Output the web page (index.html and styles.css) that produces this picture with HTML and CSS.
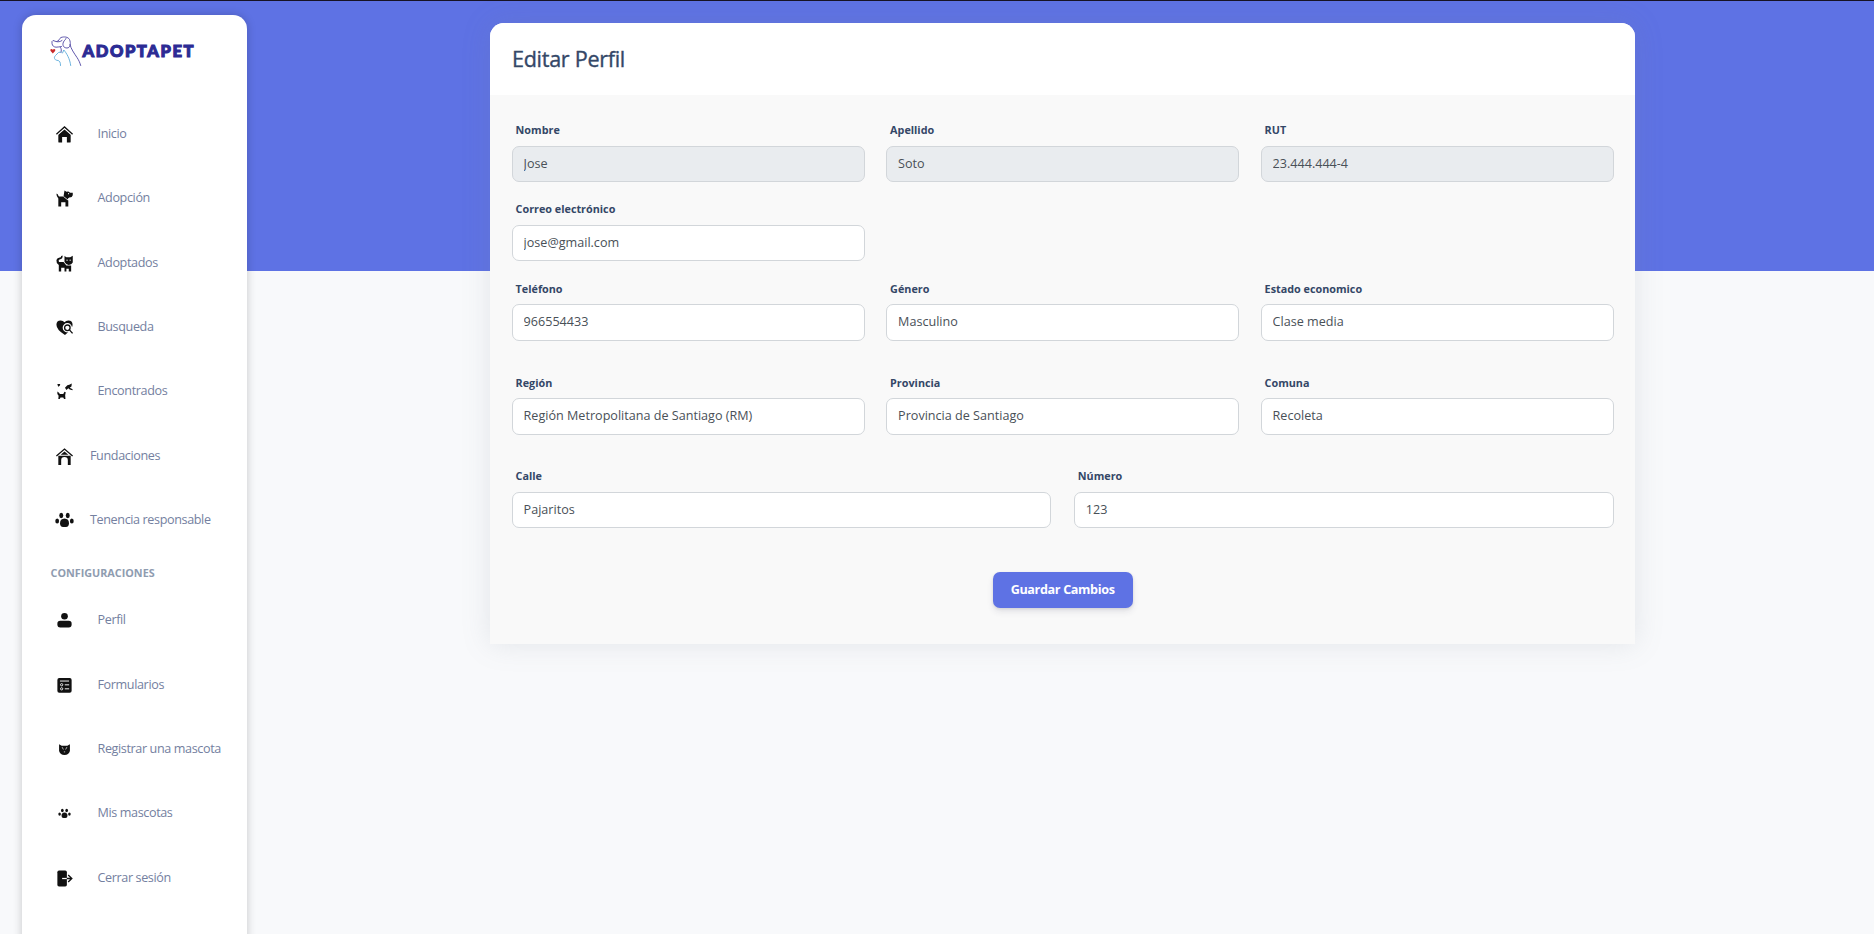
FILE: index.html
```html
<!DOCTYPE html>
<html lang="es">
<head>
<meta charset="utf-8">
<title>Adoptapet - Editar Perfil</title>
<link rel="stylesheet" href="styles.css">
</head>
<body>
<aside class="sidebar">
  <div class="brand">
    <svg width="148" height="34" viewBox="0 0 148 34" fill="none">
      <g stroke="#4f46a3" stroke-width=".9" stroke-linecap="round" stroke-linejoin="round">
        <path d="M14 6.500C12 8 10 8 8 7.500L5 6.500Q3.500 7 4 9.500C4.300 12 6 13 8 13.200C10 13.400 11.500 12.500 13.500 12.500"/>
        <path d="M9 7.500C11 7.500 11 4.500 13 3.500C16 2.500 20 2.700 21.500 5.500C23 9 22.500 14 19 14C15.500 14 14 11 15.500 8C16 6.500 17.500 6 18 4.500"/>
        <path d="M22 10.500C23 15 26 19 29 23.500C31 26.500 32 29 32.700 31.500M12.500 13.500C13.500 15 13.500 16.500 13 18.500"/>
      </g>
      <path d="M14.500 19L15.800 16C18.500 19 22 25 22.700 31.500M13 18L10.500 18.500Q9 20 7.500 21.500C5.500 23.500 6.500 26 9 26.300C12 26.500 12.500 28.500 12.500 31.500" stroke="#5cabda" stroke-width=".9" stroke-linecap="round"/>
      <path d="M4.800 19.400L2.600 17C1.600 15.200 3.600 14.400 4.800 15.800C6 14.400 8 15.200 7.100 17Z" fill="#c92a2a"/>
      <text class="wordmark" x="34.500" y="23" textLength="111" lengthAdjust="spacing">ADOPTAPET</text>
    </svg>
  </div>
  <nav class="nav">
    <a class="item"><svg class="icon" viewBox="0 0 20 20"><path d="M10 4.700L16.500 10.200V17.500Q16.500 18.500 15.500 18.500H12.500V12.500H7.500V18.500H4.500Q3.500 18.500 3.500 17.500V10.200Z"/><path class="line" d="M1.500 9.700L10 2L18.500 9.700"/><path d="M2.800 10.300L10 3.800L17.200 10.300" fill="none" stroke="#fff" stroke-width=".6"/></svg><span>Inicio</span></a>
    <a class="item"><svg class="icon" viewBox="0 0 20 20"><path d="M1.500 5Q3 4.500 3.300 6.500L4.200 8H9.500L14 12V18.500H11V14H6.500V18.500H3.500V10Q1.500 8 1.500 5Z"/><path d="M10 1.500L12 3L14 2.500L16 4H18.700V6.500Q18 9.300 14.800 9L13 11L9 7.500Z"/><path d="M9 8L13.500 11.500L15 9.500" fill="none" stroke="#fff" stroke-width=".7"/><circle cx="14.300" cy="4.900" r=".6" fill="#fff"/></svg><span>Adopción</span></a>
    <a class="item"><svg class="icon" viewBox="0 0 20 20"><path d="M8 1.500Q8.500 5 4.700 5.800Q3.200 6.500 4.200 8.500H9L12 12H17V18.500H14.500V15.500H12V18.500H10V14.500H6.500V18.500H4V11.500Q1 9 1.500 6.200Q2.300 4 5 3.800Q6.500 3.500 6.500 2Z"/><path d="M10 2L12 3.500H16L18.700 1.800V9Q17.500 11.500 14.400 11.500Q11.500 11 10 8.500Z"/><path d="M12 6.500H13.400M15.300 6.500H16.700" stroke="#fff"/></svg><span>Adoptados</span></a>
    <a class="item"><svg class="icon" viewBox="0 0 20 20"><path d="M10.500 18Q1.500 12.500 1.500 7.200Q1.500 2.500 6 2.500Q8.500 2.500 10 4.500Q11.500 2.500 14 2.500Q18.500 2.500 18.500 7.200Q18.500 10 15 14Z"/><circle cx="13" cy="10.300" r="3.600" fill="#fff" stroke="#fff" stroke-width="2.700"/><path d="M15 12.800L19 17" stroke="#fff" stroke-width="4"/><circle cx="13" cy="10.300" r="2.900" class="line"/><path class="line" d="M15.200 12.500L18.500 16.200"/></svg><span>Busqueda</span></a>
    <a class="item"><svg class="icon" viewBox="0 0 20 20"><path d="M2.500 2.200H5.500L5 4L3.300 5Z"/><path d="M10.500 6L13 3.500L15 3L17.700 1.500L17.300 4.700L15.500 6L18.500 7.500V8.700L15.500 7.900L14 6.700L12 8.500Z"/><path d="M2.500 10L4.500 11.500L5 12.500H8.700L10 10.200L11.300 10.800L10.700 14L11 18H9.500L8.700 16.300H5.800L5 18H3.500L3.800 14.500L2.500 12.500Z"/></svg><span>Encontrados</span></a>
    <a class="item tight"><svg class="icon" viewBox="0 0 20 20"><path class="line" d="M1.500 9.400L10 2.200L18.500 9.400"/><path d="M10 4.700L14 8.200H6ZM3.500 9.300H16.500V19H13.500V14Q13.500 10.500 10 10.500Q6.500 10.500 6.500 14V19H3.500Z"/></svg><span>Fundaciones</span></a>
    <a class="item tight"><svg class="icon" viewBox="0 0 20 20"><g id="paw"><ellipse cx="6.600" cy="4.700" rx="2.100" ry="2.800"/><ellipse cx="13.400" cy="4.700" rx="2.100" ry="2.800"/><ellipse cx="2.300" cy="10.500" rx="2" ry="2.700"/><ellipse cx="17.700" cy="10.500" rx="2" ry="2.700"/><path d="M10 8Q14.700 8.300 14.700 13Q14.700 16.800 11.500 16.800H8.500Q5.300 16.800 5.300 13Q5.300 8.300 10 8Z"/></g></svg><span>Tenencia responsable</span></a>
  </nav>
  <h6 class="section">CONFIGURACIONES</h6>
  <nav class="nav">
    <a class="item"><svg class="icon" viewBox="0 0 20 20"><circle cx="10" cy="5.500" r="3.500"/><rect x="2.500" y="10.300" width="15" height="7" rx="3"/></svg><span>Perfil</span></a>
    <a class="item"><svg class="icon" viewBox="0 0 20 20"><rect x="2.500" y="2.200" width="15" height="15.400" rx="2"/><path d="M5.200 5.300H14.800M10.300 9.300H14.900M10.300 13.500H14.900" stroke="#fff"/><circle cx="7" cy="9.200" r="1.200" class="mark"/><circle cx="7" cy="13.500" r="1.200" class="mark"/></svg><span>Formularios</span></a>
    <a class="item"><svg class="icon" viewBox="0 0 20 20"><path d="M4.300 4.500L7 6H13L15.700 4.500V11.500Q14.500 15.700 10 15.700Q5.500 15.700 4.300 11.500Z"/><path d="M7.500 7.500L8.800 10M12.500 7.500L11.200 10M9.300 12.500H10.700" stroke="#fff" stroke-width=".7"/></svg><span>Registrar una mascota</span></a>
    <a class="item"><svg class="icon" viewBox="0 0 20 20"><use href="#paw" transform="translate(3.300 3.600) scale(.67)"/></svg><span>Mis mascotas</span></a>
    <a class="item"><svg class="icon" viewBox="0 0 20 20"><rect x="2.500" y="1.700" width="10" height="16.600" rx="1.700"/><path d="M7.500 10H12.500" stroke="#fff" stroke-width="1.300"/><path class="line" d="M12.500 10H17.500M13.900 6.300L17.700 10L13.900 13.700"/></svg><span>Cerrar sesión</span></a>
  </nav>
</aside>
<main class="main">
  <section class="card">
    <header class="card-header"><h4>Editar Perfil</h4></header>
    <form class="card-body">
      <div class="row">
        <label class="field"><span>Nombre</span><input value="Jose" disabled></label>
        <label class="field"><span>Apellido</span><input value="Soto" disabled></label>
        <label class="field"><span>RUT</span><input value="23.444.444-4" disabled></label>
      </div>
      <div class="row">
        <label class="field"><span>Correo electrónico</span><input value="jose@gmail.com"></label>
      </div>
      <div class="row choice">
        <label class="field"><span>Teléfono</span><input value="966554433"></label>
        <label class="field"><span>Género</span><input value="Masculino"></label>
        <label class="field"><span>Estado economico</span><input value="Clase media"></label>
      </div>
      <div class="row choice">
        <label class="field"><span>Región</span><input value="Región Metropolitana de Santiago (RM)"></label>
        <label class="field"><span>Provincia</span><input value="Provincia de Santiago"></label>
        <label class="field"><span>Comuna</span><input value="Recoleta"></label>
      </div>
      <div class="row half">
        <label class="field"><span>Calle</span><input value="Pajaritos"></label>
        <label class="field"><span>Número</span><input value="123"></label>
      </div>
      <button class="save" type="button">Guardar Cambios</button>
    </form>
  </section>
</main>
</body>
</html>
```
FILE: styles.css
```css
* { box-sizing: border-box; }
body {
  margin: 0;
  height: 934px;
  overflow: hidden;
  display: flex;
  border-top: 1px solid #171325;
  background: linear-gradient(#5e72e4 271px, #f8f9fb 271px);
  font-family: "Open Sans", sans-serif;
}
.sidebar {
  flex: none;
  width: 225px;
  height: 940px;
  margin: 14px 0 0 22px;
  background: #fff;
  border-radius: 14px;
  box-shadow: 0 0 10px rgba(0, 0, 0, .2);
}
.brand { height: 86.700px; padding: 19px 0 0 26px; }
.brand svg { display: block; }
.wordmark { font: 900 16.500px Lato, sans-serif; fill: #2c2b94; stroke: #2c2b94; stroke-width: 1.100; }
.nav { display: flex; flex-direction: column; }
.item {
  display: flex;
  align-items: center;
  height: 64.400px;
  padding-left: 33px;
  gap: 23.500px;
  font-size: 12.600px;
  font-weight: 400;
  letter-spacing: -.38px;
  color: #7480a0;
  white-space: nowrap;
}
.item.tight { gap: 16px; }
.item span { line-height: 18px; }
.icon { flex: none; width: 19px; height: 19px; fill: #111; margin-top: 1px; }
.icon .line { fill: none; stroke: #111; stroke-width: 1.400; }
.icon .mark { fill: none; stroke: #fff; stroke-width: .9; }
.section {
  margin: 0;
  padding: 11.500px 0 0 28.500px;
  height: 35.500px;
  font-size: 10.800px;
  line-height: 17px;
  font-weight: 700;
  color: #8f9cb0;
}
.main { flex: 1; display: flex; justify-content: center; align-items: flex-start; padding: 22px 4px 0 8px; }
.card {
  width: 1145px;
  height: 621px;
  border-radius: 14px 14px 0 0;
  background: #f9f9f9;
  box-shadow: 0 0 29px rgba(120, 130, 145, .17);
}
.card-header { height: 72px; padding: 21px 22px 0; background: #fff; border-radius: 14px 14px 0 0; }
.card-header h4 {
  margin: 0;
  font-size: 21.600px;
  line-height: 30px;
  font-weight: 400;
  letter-spacing: -.3px;
  color: #344767;
  -webkit-text-stroke: .35px #344767;
}
.card-body { display: flex; flex-direction: column; padding: 25px 21.400px 0 21.600px; }
.row { display: grid; grid-template-columns: repeat(3, 1fr); gap: 21.500px; height: 79px; }
.row.half { grid-template-columns: 1fr 1fr; gap: 22.500px; height: 106px; }
.row.choice { height: 94px; }
.row.choice input { height: 37px; padding-bottom: 3px; }
.row.choice span { line-height: 21px; }
.field { display: flex; flex-direction: column; align-items: stretch; }
.field span { height: 26px; padding-left: 4px; font-size: 10.800px; line-height: 19px; font-weight: 700; color: #344767; }
.field input {
  width: 100%;
  height: 36px;
  padding: 0 11px 2px;
  border: 1px solid #d2d6da;
  border-radius: 7px;
  background: #fff;
  color: #495057;
  font: 400 12.600px "Open Sans", sans-serif;
}
.field input:disabled { background: #e9ecef; }
.save {
  align-self: center;
  width: 140px;
  height: 36px;
  padding: 0 0 2px;
  border: 0;
  border-radius: 7px;
  background: #5e72e4;
  box-shadow: 0 4px 6px rgba(50, 50, 93, .1), 0 1px 3px rgba(0, 0, 0, .1);
  color: #fff;
  font: 700 12.600px "Open Sans", sans-serif;
  letter-spacing: -.35px;
}
```
